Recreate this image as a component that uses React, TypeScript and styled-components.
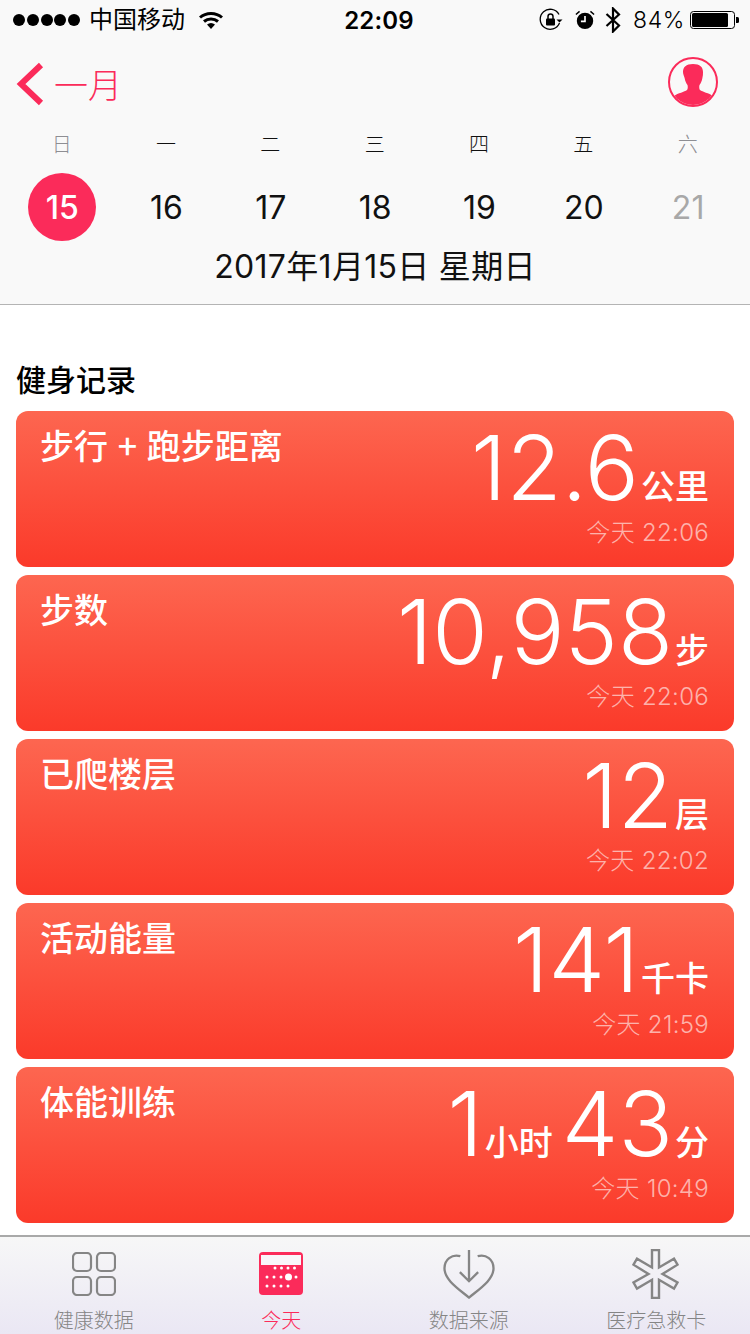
import React from "react";
import styled, { createGlobalStyle } from "styled-components";

const CJK = `"Noto Sans CJK SC", sans-serif`;
const PINK = "#fb2b5a";

const Global = createGlobalStyle`
  html, body { margin: 0; padding: 0; background: #fff; }
  body { font-family: Inter, ${CJK}; width: 750px; height: 1334px; overflow: hidden; }
  * { box-sizing: border-box; }
`;

const Page = styled.div`
  width: 750px;
  height: 1334px;
  display: flex;
  flex-direction: column;
  background: #fff;
`;

const Header = styled.header`
  height: 305px;
  background: #f9f9f9;
  border-bottom: 1px solid #b4b4b4;
  display: flex;
  flex-direction: column;
`;

const StatusBar = styled.div`
  height: 40px;
  padding: 0 11px 0 13px;
  display: grid;
  grid-template-columns: 1fr auto 1fr;
  align-items: center;
  color: #000;
`;

const StatusSide = styled.div<{ $end?: boolean }>`
  display: flex;
  align-items: center;
  justify-content: ${(p) => (p.$end ? "flex-end" : "flex-start")};
`;

const Dots = styled.div`
  display: flex;
  gap: 1.75px;
  margin-right: 9px;
`;

const Dot = styled.span`
  width: 12px;
  height: 12px;
  border-radius: 50%;
  background: #000;
`;

const Carrier = styled.span`
  font-size: 24px;
  line-height: 30px;
  font-weight: 400;
  margin-right: 14px;
`;

const Clock = styled.span`
  font-size: 24px;
  font-weight: 600;
  letter-spacing: 0.2px;
  margin-left: 6px;
`;

const Percent = styled.span`
  font-size: 23px;
  font-weight: 300;
  letter-spacing: 0.6px;
  margin: 0 5px 0 12px;
`;

const Nav = styled.div`
  height: 92px;
  padding: 17px 32px 0 16px;
  display: flex;
  justify-content: space-between;
  align-items: flex-start;
`;

const Back = styled.div`
  display: flex;
  align-items: center;
  gap: 10px;
  color: ${PINK};
  font-size: 34px;
  line-height: 54px;
`;

const BackLabel = styled.span`
  font-family: ${CJK};
  font-weight: 300;
`;

const Week = styled.div`
  display: grid;
  grid-template-columns: repeat(7, 104.33px);
  padding-left: 9.5px;
`;

const WeekCell = styled.div<{ $muted?: boolean }>`
  font-family: ${CJK};
  font-weight: 300;
  font-size: 20px;
  line-height: 24px;
  height: 24px;
  text-align: center;
  color: ${(p) => (p.$muted ? "#8e8e93" : "#111")};
`;

const Days = styled.div`
  display: grid;
  grid-template-columns: repeat(7, 104.33px);
  padding-left: 10px;
  margin-top: 17px;
`;

const Day = styled.div<{ $muted?: boolean }>`
  height: 68px;
  display: flex;
  align-items: center;
  justify-content: center;
  font-size: 32px;
  font-weight: 400;
  color: ${(p) => (p.$muted ? "#a8a8a8" : "#111")};
`;

const ActiveDay = styled.span`
  width: 68px;
  height: 68px;
  border-radius: 50%;
  background: ${PINK};
  color: #fff;
  display: flex;
  align-items: center;
  justify-content: center;
  font-weight: 500;
`;

const DateLine = styled.div`
  margin-top: 7px;
  text-align: center;
  font-size: 32px;
  line-height: 38px;
  color: #111;
  font-weight: 400;
  letter-spacing: 0.3px;
`;

const Main = styled.main`
  flex: 1;
  padding: 0 16px;
`;

const SectionTitle = styled.h2`
  margin: 51px 0 12px;
  font-size: 30px;
  line-height: 44px;
  font-family: ${CJK};
  font-weight: 500;
  height: 44px;
  color: #000;
`;

const Cards = styled.div`
  display: flex;
  flex-direction: column;
  gap: 8px;
  margin-top: -1px;
`;

const Card = styled.div`
  height: 156px;
  border-radius: 12px;
  background: linear-gradient(180deg, #fd6650 0%, #fb3a2a 100%);
  color: #fff;
  padding: 12px 25px 0 24px;
  display: flex;
  justify-content: space-between;
`;

const CardTitle = styled.div`
  font-family: ${CJK};
  font-size: 34px;
  line-height: 44px;
  font-weight: 500;
  word-spacing: 2px;
`;

const CardRight = styled.div`
  display: flex;
  flex-direction: column;
  align-items: flex-end;
`;

const Value = styled.div`
  height: 96px;
  margin-top: -3px;
  white-space: nowrap;
  text-align: right;
`;

const Big = styled.span`
  font-family: Inter, sans-serif;
  font-size: 90px;
  line-height: 96px;
  font-weight: 260;
`;

const Unit = styled.span`
  font-family: ${CJK};
  font-size: 34px;
  line-height: 40px;
  font-weight: 500;
  margin-left: 2px;
  vertical-align: 1px;
  &:not(:last-child) {
    margin-right: 9px;
  }
`;

const Stamp = styled.div`
  font-size: 24px;
  line-height: 32px;
  margin-top: 1px;
  font-weight: 300;
  color: rgba(255, 255, 255, 0.6);
  letter-spacing: 0.3px;
`;

const TabBar = styled.nav`
  height: 99px;
  border-top: 2px solid #a9a9a9;
  background: linear-gradient(180deg, #f7f7f7 0%, #eae7f4 100%);
  display: grid;
  grid-template-columns: repeat(4, 187.5px);
`;

const Tab = styled.div<{ $active?: boolean }>`
  display: flex;
  flex-direction: column;
  align-items: center;
  color: ${(p) => (p.$active ? PINK : "#858585")};
`;

const TabIcon = styled.div`
  height: 70px;
  padding-top: 3px;
  display: flex;
  align-items: center;
  justify-content: center;
`;

const TabLabel = styled.span`
  font-family: ${CJK};
  font-size: 20px;
  line-height: 26px;
  font-weight: 300;
`;

const Wifi = () => (
  <svg width="24" height="18" viewBox="0 0 24 18">
    <path d="M1 6.500C7 1 17 1 23 6.500" fill="none" stroke="#000" strokeWidth="3" />
    <path d="M5 10.500C9 7 15 7 19 10.500" fill="none" stroke="#000" strokeWidth="3" />
    <path d="M8 13.500C10.500 11.500 13.500 11.500 16 13.500L12 18Z" fill="#000" />
  </svg>
);

const RotationLock = () => (
  <svg width="24" height="24" viewBox="0 0 24 24" style={{ marginRight: 12 }}>
    <path d="M20.500 15A10 10 0 1 1 20 6.500" fill="none" stroke="#000" strokeWidth="1.300" />
    <path d="M17.500 11.500h6l-3 3z" fill="#000" />
    <rect x="7" y="10.500" width="9" height="7" rx="1" fill="#000" />
    <path d="M9 11V8.500a2.500 2.500 0 0 1 5 0V11" fill="none" stroke="#000" strokeWidth="1.500" />
  </svg>
);

const Alarm = () => (
  <svg width="20" height="20" viewBox="0 0 22 22" style={{ marginRight: 10 }}>
    <circle cx="11" cy="12" r="9" fill="#000" />
    <path d="M11 6.500V12.500H6.500" fill="none" stroke="#fff" strokeWidth="1.800" />
    <path d="M1 5L5 1.500M21 5L17 1.500" stroke="#000" strokeWidth="1.600" />
  </svg>
);

const Bluetooth = () => (
  <svg width="16" height="26" viewBox="0 0 16 26">
    <path d="M1.500 7L14 18.500L8 24.500V1.500L14 7.500L1.500 19" fill="none" stroke="#000" strokeWidth="2.200" />
  </svg>
);

const Battery = () => (
  <svg width="49" height="20" viewBox="0 0 49 20">
    <rect x="0.500" y="1.500" width="44" height="17" rx="3" fill="none" stroke="#000" />
    <rect x="2" y="3" width="36" height="14" rx="1.500" fill="#000" />
    <path d="M46 7h1.500a1.500 1.500 0 0 1 1.500 1.500v3a1.500 1.500 0 0 1-1.500 1.500H46z" fill="#000" />
  </svg>
);

const Chevron = () => (
  <svg width="28" height="44" viewBox="0 0 28 44">
    <path d="M25 3L5 22L25 41" fill="none" stroke={PINK} strokeWidth="6" />
  </svg>
);

const Avatar = () => (
  <svg width="50" height="50" viewBox="0 0 50 50">
    <defs>
      <clipPath id="av">
        <circle cx="25" cy="25" r="23" />
      </clipPath>
    </defs>
    <circle cx="25" cy="25" r="24" fill="none" stroke={PINK} strokeWidth="2" />
    <path
      clipPath="url(#av)"
      d="M25 7c7 0 10 3 10 8 0 2 0 4-.6 6-.5 3-1.700 5.400-2.900 7-.5 1.500-.3 4 .5 5 2.500 2 9 3 13 6 2 2 3 4 3 11H3c0-7 1-9 3-11 4-3 10.500-4 13-6 .8-1 1-3.500.5-5-1.200-1.600-2.400-4-2.900-7C16 19 15 17 15 15c0-5 3-8 10-8z"
      fill={PINK}
    />
  </svg>
);

const GridIcon = () => (
  <svg width="44" height="44" viewBox="0 0 44 44">
    {[
      [1, 1],
      [25, 1],
      [1, 25],
      [25, 25],
    ].map(([x, y]) => (
      <rect key={`${x}-${y}`} x={x} y={y} width="18" height="18" rx="4" fill="none" stroke="#858585" strokeWidth="2.200" />
    ))}
  </svg>
);

const dotRows = [
  { y: 16, xs: [16, 22.500, 29, 35.500] },
  { y: 25, xs: [8, 15, 22, 37] },
  { y: 34, xs: [8, 15, 22, 29] },
];

const CalendarIcon = () => (
  <svg width="44" height="44" viewBox="0 0 44 44">
    <rect width="44" height="43" rx="4" fill={PINK} />
    <rect x="2" y="3" width="40" height="10" fill="#f9f6fa" />
    {dotRows.map((r) => r.xs.map((x) => <circle key={`${r.y}-${x}`} cx={x} cy={r.y} r="1.500" fill="#fff" />))}
    <circle cx="29.500" cy="25" r="3.500" fill="#fff" />
  </svg>
);

const HeartIcon = () => (
  <svg width="54" height="50" viewBox="0 0 54 52">
    <path
      d="M18 7.500C9 5 1.500 11 1.500 20c0 12 14 21 25.500 30.500C38.500 41 52.500 32 52.500 20c0-9-7.500-15-16.500-12.500"
      fill="none"
      stroke="#858585"
      strokeWidth="2.400"
    />
    <path d="M27 1V33M17.500 24L27 33.500L36.500 24" fill="none" stroke="#858585" strokeWidth="2.400" />
  </svg>
);

const StarOfLife = () => (
  <svg width="50" height="50" viewBox="0 0 50 50">
    <path
      d="M21 1h7v17.500l15-8.800 3.500 6L31.500 25 46.500 33.500l-3.500 6L28 30.800V49h-7V30.800L6 39.500l-3.500-6L17.500 25 2.500 15.700l3.500-6L21 18.500z"
      fill="none"
      stroke="#858585"
      strokeWidth="2.400"
    />
  </svg>
);

const cards = [
  { title: "步行 + 跑步距离", parts: [["12.6", "公里"]], stamp: "今天 22:06" },
  { title: "步数", parts: [["10,958", "步"]], stamp: "今天 22:06" },
  { title: "已爬楼层", parts: [["12", "层"]], stamp: "今天 22:02" },
  { title: "活动能量", parts: [["141", "千卡"]], stamp: "今天 21:59" },
  { title: "体能训练", parts: [["1", "小时"], ["43", "分"]], stamp: "今天 10:49" },
];

const weekdays = ["日", "一", "二", "三", "四", "五", "六"];
const tabs = [
  { label: "健康数据", icon: <GridIcon /> },
  { label: "今天", icon: <CalendarIcon />, active: true },
  { label: "数据来源", icon: <HeartIcon /> },
  { label: "医疗急救卡", icon: <StarOfLife /> },
];

export default function App() {
  return (
    <Page>
      <Global />
      <Header>
        <StatusBar>
          <StatusSide>
            <Dots>
              {[0, 1, 2, 3, 4].map((i) => (
                <Dot key={i} />
              ))}
            </Dots>
            <Carrier>中国移动</Carrier>
            <Wifi />
          </StatusSide>
          <Clock>22:09</Clock>
          <StatusSide $end>
            <RotationLock />
            <Alarm />
            <Bluetooth />
            <Percent>84%</Percent>
            <Battery />
          </StatusSide>
        </StatusBar>
        <Nav>
          <Back>
            <Chevron />
            <BackLabel>一月</BackLabel>
          </Back>
          <Avatar />
        </Nav>
        <Week>
          {weekdays.map((d, i) => (
            <WeekCell key={d} $muted={i === 0 || i === 6}>
              {d}
            </WeekCell>
          ))}
        </Week>
        <Days>
          {[15, 16, 17, 18, 19, 20, 21].map((d, i) => (
            <Day key={d} $muted={i === 6}>
              {i === 0 ? <ActiveDay>{d}</ActiveDay> : d}
            </Day>
          ))}
        </Days>
        <DateLine>2017年1月15日 星期日</DateLine>
      </Header>
      <Main>
        <SectionTitle>健身记录</SectionTitle>
        <Cards>
          {cards.map((c) => (
            <Card key={c.title}>
              <CardTitle>{c.title}</CardTitle>
              <CardRight>
                <Value>
                  {c.parts.map(([v, u]) => (
                    <React.Fragment key={u}>
                      <Big>{v}</Big>
                      <Unit>{u}</Unit>
                    </React.Fragment>
                  ))}
                </Value>
                <Stamp>{c.stamp}</Stamp>
              </CardRight>
            </Card>
          ))}
        </Cards>
      </Main>
      <TabBar>
        {tabs.map((t) => (
          <Tab key={t.label} $active={t.active}>
            <TabIcon>{t.icon}</TabIcon>
            <TabLabel>{t.label}</TabLabel>
          </Tab>
        ))}
      </TabBar>
    </Page>
  );
}
